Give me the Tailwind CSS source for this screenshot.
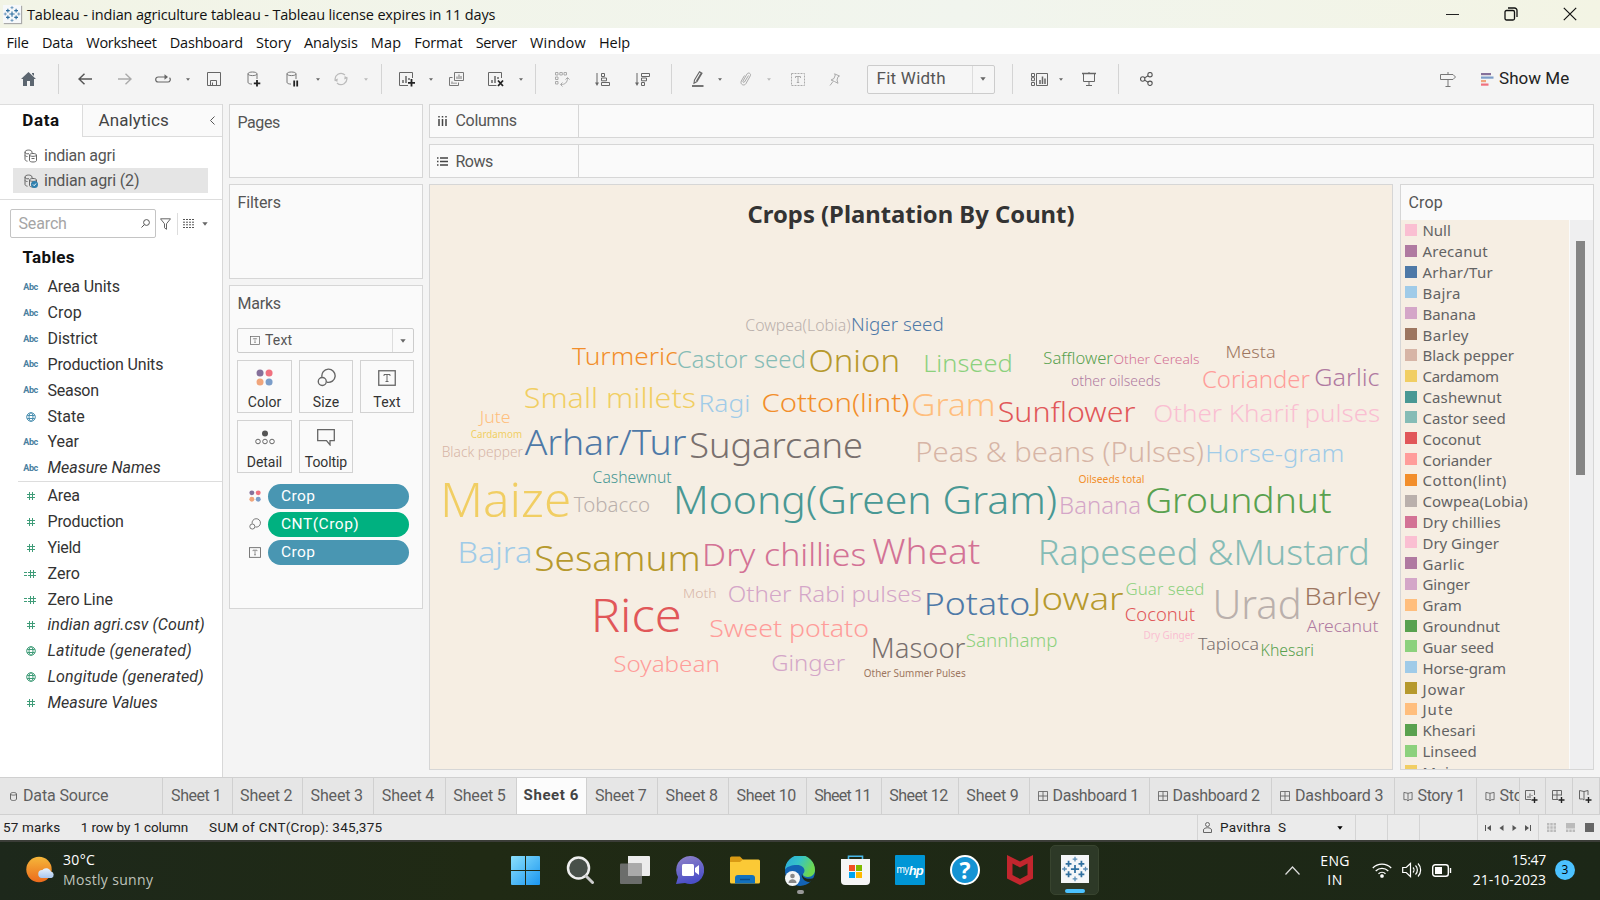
<!DOCTYPE html>
<html lang="en">
<head>
<meta charset="utf-8">
<title>Tableau - indian agriculture tableau</title>
<script src="https://cdn.jsdelivr.net/npm/@tailwindcss/browser@4"></script>
</head>
<body class="w-[1600px] h-[900px] overflow-hidden bg-[#f4f4f4] font-['Roboto',sans-serif] text-[#333] text-base flex flex-col">

<svg class="hidden">
  <defs>
    <symbol id="tab" viewBox="0 0 24 24"><g fill="none" stroke-width="1.5">
      <path stroke="#2f6f9f" d="M12 8.5v7M8.5 12h7M6.5 5v5M4 7.5h5M17.5 5v5M15 7.5h5M6.5 14v5M4 16.500h5M17.500 14v5M15 16.500h5"/>
      <path stroke="#5b8db5" stroke-width="1.100" d="M12 1.500v4M10 3.500h4M12 18.500v4M10 20.500h4M3 10v4M1 12h4M21 10v4M19 12h4"/></g></symbol>
    <symbol id="caret" viewBox="0 0 8 6"><path fill="currentColor" d="M0 0.500h8L4 5.500z"/></symbol>
    <symbol id="db" viewBox="0 0 14 14"><g fill="none" stroke="#666" stroke-width="1"><path d="M1 3c0-2.600 7-2.600 7 0v1M1 3v7.500c0 .8 1 1.500 2.500 1.700M1 3c0 2 3 2 4 1.700M1 6.500c.6.9 1.500 1 2.500 1"/><path d="M5.500 6c0-2 7-2 7 0v5.500c0 2-7 2-7 0zM5.500 6c0 1.800 7 1.800 7 0M7.500 9.500h3"/></g></symbol>
    <symbol id="hash" viewBox="0 0 14 12"><path stroke="#3f9c78" stroke-width="1" fill="none" d="M5.500 2v8M8.500 2v8M3 4.500h8M3 7.500h8"/></symbol>
    <symbol id="ehash" viewBox="0 0 14 12"><path stroke="#3f9c78" stroke-width="1" fill="none" d="M6.500 2v8M9.500 2v8M4 4.500h8M4 7.500h8M0 4.500h3M0 7.500h3"/></symbol>
    <symbol id="globe" viewBox="0 0 12 12"><g fill="none" stroke="currentColor" stroke-width="1"><circle cx="6" cy="6" r="4.300"/><ellipse cx="6" cy="6" rx="2" ry="4.300"/><path d="M2.200 4.500h7.600M2.200 7.500h7.600"/></g></symbol>
    <symbol id="four" viewBox="0 0 16 16"><circle cx="3.800" cy="3.800" r="3.300" fill="#85709a"/><circle cx="12.300" cy="3.800" r="3.300" fill="#f0717f"/><circle cx="3.800" cy="12.300" r="3.300" fill="#f0a57b"/><circle cx="12.300" cy="12.300" r="3.300" fill="#7b9dc9"/></symbol>
    <symbol id="size" viewBox="0 0 18 18"><g fill="none" stroke="#666" stroke-width="1.300"><path d="M4.700 8.500A6.300 6.300 0 1 1 9.500 13.500"/><circle cx="5" cy="12.800" r="3.800"/></g></symbol>
    <symbol id="tbox" viewBox="0 0 18 16"><rect x=".75" y=".75" width="16.500" height="14.500" fill="none" stroke="#666" stroke-width="1.300"/><path fill="none" stroke="#666" d="M6 6V4.500h6V6M9 4.500v7M7.500 11.500h3"/></symbol>
    <symbol id="dash" viewBox="0 0 11 11"><path fill="none" stroke="#666" d="M.5.500h10v10H.500zM5.500.500v10M.500 5.500h10"/></symbol>
    <symbol id="story" viewBox="0 0 11 12"><path fill="none" stroke="#666" d="M1 1.500l4.500 1 4.500-1v8h-3l-1.500 1.500-1.500-1.500H1zM5.500 2.500V10"/></symbol>
  </defs>
</svg>

<!-- title bar -->
<header class="h-[28px] shrink-0 flex items-center bg-linear-to-r from-[#f2f4e6] via-[#f1f5ee] via-60% to-[#f3f4e4] font-['Open_Sans',sans-serif] text-[14.500px] text-[#111]">
  <div class="ml-[3px] size-[18px] bg-[#f6f8fa] shadow-[1px_1px_1px_#aaa]"><svg class="size-[18px]"><use href="#tab"/></svg></div>
  <span class="ml-[6px] mt-[2px] whitespace-nowrap" data-w="468">Tableau - indian agriculture tableau - Tableau license expires in 11 days</span>
  <div class="ml-auto flex items-center h-full pr-[23px] gap-[45px]">
    <svg class="w-[13px] h-[14px]" viewBox="0 0 13 14"><path stroke="#222" d="M0 7.500h13"/></svg>
    <svg class="size-[14px]" viewBox="0 0 14 14" fill="none" stroke="#111" stroke-width="1.300"><rect x="1" y="3.500" width="9.500" height="9.500" rx="1.500"/><path d="M4 1h6.500a2.500 2.500 0 0 1 2.500 2.500V10"/></svg>
    <svg class="size-[14px]" viewBox="0 0 14 14" fill="none" stroke="#111" stroke-width="1.200"><path d="M.8.800l12.400 12.400M13.200.800L.8 13.200"/></svg>
  </div>
</header>

<!-- menu -->
<nav class="h-[26px] shrink-0 bg-white flex items-center pl-[6.500px] gap-[13.100px] font-['Open_Sans',sans-serif] text-[14.500px] text-[#111] pt-[3px]">
  <span data-w="22">File</span><span data-w="31">Data</span><span data-w="70">Worksheet</span><span data-w="73">Dashboard</span><span data-w="34.500">Story</span><span data-w="53.500">Analysis</span><span data-w="30">Map</span><span data-w="48">Format</span><span data-w="41">Server</span><span data-w="55.500">Window</span><span data-w="31">Help</span>
</nav>

<!-- toolbar -->
<div class="h-[50px] shrink-0 flex items-center text-[#666]">
  <div class="w-[57.500px] flex justify-center"><svg class="w-[15px] h-[14px]" viewBox="0 0 15 14"><path fill="#5c6670" d="M7.500 0L15 7h-2v7H9V9H6v5H2V7H0zM11 1h2v3l-2-2z"/></svg></div>
  <i class="w-px h-[30px] bg-[#d4d4d4]"></i>
  <div class="ml-[6px] w-[40px] flex justify-center"><svg class="w-[14px] h-[12px]" viewBox="0 0 14 12" fill="none" stroke="#555" stroke-width="1.500"><path d="M14 6H1M6.500.8L1 6l5.500 5.200"/></svg></div>
  <div class="w-[40px] flex justify-center"><svg class="w-[14px] h-[12px]" viewBox="0 0 14 12" fill="none" stroke="#aaa" stroke-width="1.400"><path d="M0 6h13M7.500.8L13 6l-5.500 5.200"/></svg></div>
  <div class="w-[37px] flex justify-center"><svg class="w-[16px] h-[10px]" viewBox="0 0 16 10" fill="none" stroke="#666" stroke-width="1.200"><path d="M11.500 3H3.200a2.500 2.500 0 0 0 0 5h9.600a2.500 2.500 0 0 0 1.700-4.300"/><path fill="#666" stroke="none" d="M9.500.300v5.400L13 3z"/></svg></div>
  <div class="w-[12px] flex justify-center"><svg class="w-[4px] h-[3px]"><use href="#caret"/></svg></div>
  <div class="w-[40px] flex justify-center"><svg class="size-[14px]" viewBox="0 0 14 14" fill="none" stroke="#666"><path d="M.5.500h13v13H.500zM3.500 13V8.500h6V13M5.500 13v-2.500"/></svg></div>
  <div class="w-[40px] flex justify-center"><svg class="w-[14px] h-[16px]" viewBox="0 0 14 16" fill="none" stroke="#777"><path d="M1 2.800c0-2.400 9-2.400 9 0s-9 2.400-9 0v8.500c0 1.200 2 1.700 4 1.800M10 3v5"/><path stroke="#222" stroke-width="1.800" d="M10 9v6.500M6.800 12.300h6.500"/></svg></div>
  <div class="w-[38px] flex justify-center"><svg class="w-[14px] h-[16px]" viewBox="0 0 14 16" fill="none" stroke="#777"><path d="M1 2.800c0-2.400 9-2.400 9 0s-9 2.400-9 0v8.500c0 1.200 2 1.700 4 1.800M10 3v5"/><path stroke="#222" stroke-width="1.800" d="M8.200 9.500v6M11.200 9.500v6"/></svg></div>
  <div class="w-[12px] flex justify-center"><svg class="w-[4px] h-[3px]"><use href="#caret"/></svg></div>
  <div class="w-[34px] flex justify-center"><svg class="size-[14px]" viewBox="0 0 14 14" fill="none" stroke="#bbb" stroke-width="1.200"><path d="M1.500 9A5.800 5.800 0 0 1 11 3M12.500 5A5.800 5.800 0 0 1 3 11"/><path fill="#bbb" stroke="none" d="M0 8l3.800-1.500-.5 3.500zM14 6l-3.800 1.500.5-3.500z"/></svg></div>
  <div class="w-[16px] flex justify-center text-[#bbb]"><svg class="w-[4px] h-[3px]"><use href="#caret"/></svg></div>
  <i class="ml-[7px] w-px h-[30px] bg-[#d4d4d4]"></i>
  <div class="ml-[5px] w-[40px] flex justify-center"><svg class="w-[16px] h-[15px]" viewBox="0 0 16 15" fill="none" stroke="#666"><path d="M13.500 6V.500H.500v13H9"/><path stroke-width="1.500" d="M4 11V8M7 11V4M10 8V6"/><path stroke="#222" stroke-width="1.800" d="M12.500 7v7.500M9 10.800h7"/></svg></div>
  <div class="w-[9px] flex justify-center"><svg class="w-[4px] h-[3px]"><use href="#caret"/></svg></div>
  <div class="ml-[1px] w-[40px] flex justify-center"><svg class="w-[15px] h-[14px]" viewBox="0 0 15 14" fill="none" stroke="#777"><path d="M5.500.500h9v8h-9zM3.500 5.500h-3v8h9v-3M8 7V4.500M10 7V2.500M12 7V4M3 12V9.500M5 12v-1.500M7 12v-1.500"/></svg></div>
  <div class="w-[38px] flex justify-center"><svg class="w-[16px] h-[15px]" viewBox="0 0 16 15" fill="none" stroke="#666"><path d="M13.500 6V.500H.500v13H8.500"/><path stroke-width="1.500" d="M4 11V8M7 11V4M10 7V5"/><path stroke="#222" stroke-width="1.800" d="M10 8.500l5 5.500M15 8.500l-5 5.500"/></svg></div>
  <div class="w-[12px] flex justify-center"><svg class="w-[4px] h-[3px]"><use href="#caret"/></svg></div>
  <i class="ml-[8.500px] w-px h-[30px] bg-[#d4d4d4]"></i>
  <div class="ml-[5.500px] w-[41px] flex justify-center"><svg class="w-[15px] h-[15px]" viewBox="0 0 15 15" fill="none" stroke="#aaa"><path d="M.5.500h2.500v2.500H.500zM4.800.500h2.500v2.500H4.800zM9 .5h2.500v2.500H9zM.5 5h2.500v2.500H.500zM.5 9.500h2.500v2.500H.500zM6 12.500c4 0 6.500-2 6.500-6.500M10.500 7.500l2-2 2 2M7.500 10.500l-2 2 2 2"/></svg></div>
  <div class="w-[40px] flex justify-center"><svg class="w-[15px] h-[13px]" viewBox="0 0 15 13" fill="none" stroke="#666"><path d="M2 0v11"/><path fill="#666" stroke="none" d="M0 9.500h4l-2 3.500z"/><path d="M6.500.500h3v3h-3zM6.500 5h5v2.800h-5zM6.500 9.500h8v3h-8z"/></svg></div>
  <div class="w-[40px] flex justify-center"><svg class="w-[15px] h-[13px]" viewBox="0 0 15 13" fill="none" stroke="#666"><path d="M2 0v11"/><path fill="#666" stroke="none" d="M0 9.500h4l-2 3.500z"/><path d="M6.500.500h8v3h-8zM6.500 5h5v2.800h-5zM6.500 9.500h3v3h-3z"/></svg></div>
  <i class="ml-[8px] w-px h-[30px] bg-[#d4d4d4]"></i>
  <div class="ml-[9px] w-[34px] flex justify-center"><svg class="w-[12px] h-[16px]" viewBox="0 0 12 16" fill="none" stroke="#666"><path stroke-width="1.100" d="M2.500 9L7.500.800l2.500 1.500L5 10.500l-3 1.700zM4.500 10l5-8.500"/><path stroke-width="1.800" d="M0 15h11.500"/></svg></div>
  <div class="w-[10px] flex justify-center"><svg class="w-[4px] h-[3px]"><use href="#caret"/></svg></div>
  <div class="w-[42px] flex justify-center"><svg class="w-[12px] h-[14px]" viewBox="0 0 12 14" fill="none" stroke="#aaa"><path d="M8.500 3.500L4.500 10c-.8 1-2 .2-1.500-1l4-7c1.200-2 4.500-.5 3.300 1.800L6 11.500C4.300 14.500-.3 12.500 1.300 9L4.500 3.500"/></svg></div>
  <div class="w-[5px] flex justify-center text-[#bbb]"><svg class="w-[4px] h-[3px]"><use href="#caret"/></svg></div>
  <div class="ml-[8px] w-[36px] flex justify-center"><svg class="w-[14px] h-[13px]" viewBox="0 0 14 13" fill="none" stroke="#aaa"><path stroke-dasharray="2 1" d="M.5.500h13v12H.500z"/><path d="M4.500 5V3.500h5V5M7 3.500v6M5.800 9.500h2.400"/></svg></div>
  <div class="w-[38px] flex justify-center"><svg class="w-[11px] h-[13px]" viewBox="0 0 11 13" fill="none" stroke="#aaa"><path d="M5.500.800L10.500 3 9 3.800 8 7l1 3.300-3.500-1.800L2 7l3-1.500L6.300 2zM4 8.500L1 12.500"/></svg></div>
  <div class="ml-[13px] w-[128px] h-[29px] border border-[#ccc] rounded-[2px] flex items-center bg-[#f6f6f6]">
    <span class="ml-[9px] text-[17px] text-[#555]" data-w="69">Fit Width</span>
    <div class="ml-auto w-[22px] h-full border-l border-[#ddd] flex items-center justify-center"><svg class="w-[6px] h-[4px]"><use href="#caret"/></svg></div>
  </div>
  <i class="ml-[17px] w-px h-[30px] bg-[#d4d4d4]"></i>
  <div class="ml-[11px] w-[32px] flex justify-center"><svg class="w-[17px] h-[13px]" viewBox="0 0 17 13" fill="none" stroke="#666"><path d="M.5.500h3v3h-3zM.5 4.700h3v3h-3zM.5 9.500h3v3h-3zM5.500.500h11v12h-11z"/><path stroke-width="1.500" d="M9 11V7M11.500 11V3.500M14 11V5.500"/></svg></div>
  <div class="w-[10px] flex justify-center"><svg class="w-[4px] h-[3px]"><use href="#caret"/></svg></div>
  <div class="ml-[4px] w-[39px] flex justify-center"><svg class="w-[14px] h-[14px]" viewBox="0 0 14 14" fill="none" stroke="#666"><path stroke-width="1.500" d="M0 1.500h14"/><path d="M1.500 2v7.500h11V2M7 9.500v4M4 13.500h6M7 0v1"/></svg></div>
  <i class="ml-[9px] w-px h-[30px] bg-[#d4d4d4]"></i>
  <div class="ml-[8.500px] w-[38px] flex justify-center"><svg class="w-[13px] h-[14px]" viewBox="0 0 13 14" fill="none" stroke="#555" stroke-width="1.100"><circle cx="10" cy="2.700" r="2.200"/><circle cx="2.700" cy="7" r="2.200"/><circle cx="10" cy="11.300" r="2.200"/><path d="M4.600 5.900l3.500-2.100M4.600 8.100l3.500 2.100"/></svg></div>
  <div class="ml-[264px] w-[38px] flex justify-center"><svg class="w-[16px] h-[15px]" viewBox="0 0 16 15" fill="none" stroke="#777"><path d="M.5 2.500H13l2.500 2.500L13 7.500H.500zM8 0v2.500M8 7.500v7M5.500 14.500h5"/></svg></div>
  <svg class="ml-[14px] w-[13px] h-[13px]" viewBox="0 0 13 13"><path fill="#85709a" d="M0 0h10v2.200H0z"/><path fill="#7b9dc9" d="M0 3.500h12.500v2.200H0z"/><path fill="#f0a57b" d="M0 7h5v2.200H0z"/><path fill="#f0717f" d="M0 10.500h7.500v2.200H0z"/></svg>
  <span class="ml-[5px] text-[17px] text-[#222]" data-w="70">Show Me</span>
</div>

<!-- workspace -->
<main class="h-[673px] shrink-0 flex">
  <aside class="w-[223px] h-full bg-white border-r border-[#d8d8d8] flex flex-col">
    <div class="flex h-[33px] shrink-0">
      <div class="w-[82px] border-t border-[#ddd] flex items-center justify-center text-[17px] font-bold text-[#111]"><span data-w="37">Data</span></div>
      <div class="flex-1 bg-[#fafafa] border border-[#dcdcdc] border-r-0 flex items-center pl-[15.500px] text-[17px] text-[#444]"><span data-w="70">Analytics</span>
        <svg class="ml-auto mr-[7px] w-[5px] h-[9px]" viewBox="0 0 5 9" fill="none" stroke="#555"><path d="M4.500.500l-4 4 4 4"/></svg></div>
    </div>
    <div class="mt-[6px] h-[25px] flex items-center pl-[24px] text-[16px] text-[#555]"><svg class="size-[14px]"><use href="#db"/></svg><span class="ml-[6px]" data-w="71">indian agri</span></div>
    <div class="h-[25px] ml-[13px] w-[195px] flex items-center pl-[11px] text-[16px] text-[#555] bg-[#e5e5e5]"><svg class="size-[14px]" viewBox="0 0 14 14"><use href="#db"/><circle cx="10.500" cy="10.500" r="3.500" fill="#2f80ae"/><path d="M9 10.500l1.200 1.200L12 9.500" stroke="#fff" fill="none"/></svg><span class="ml-[6px]" data-w="95">indian agri (2)</span></div>
    <div class="mt-[6px] border-t border-[#ddd] pt-[9px] pl-[10px] flex items-center">
      <div class="w-[146px] h-[29px] border border-[#c4c4c4] rounded-[2px] flex items-center px-[7.500px]"><span class="text-[16px] text-[#a5a5a5]" data-w="48">Search</span><svg class="ml-auto mr-[-2px] size-[9px]" viewBox="0 0 9 9" fill="none" stroke="#555"><circle cx="5.500" cy="3.500" r="2.900"/><path d="M3.300 5.700L.500 8.500"/></svg></div>
      <svg class="ml-[4px] w-[11px] h-[12px]" viewBox="0 0 11 12" fill="none" stroke="#666"><path d="M.5.800h10l-4 5v5.500l-2-1.500v-4z"/></svg>
      <i class="ml-[6px] w-px h-[22px] bg-[#ddd]"></i>
      <svg class="ml-[5px] w-[11px] h-[9px]" viewBox="0 0 11 9" stroke="#555"><path stroke-dasharray="2 1" d="M0 .5h11M0 3.200h11M0 5.800h11M0 8.500h11"/></svg>
      <svg class="ml-[8px] w-[6px] h-[4px] text-[#666]"><use href="#caret"/></svg>
    </div>
    <div class="mt-[6px] h-[27px] pl-[22.500px] flex items-center text-[17px] font-bold text-[#111]"><span data-w="52">Tables</span></div>
    <div id="dims" class="mt-[3.500px]"></div>
    <div class="ml-[18px] border-t border-[#ddd]"></div>
    <div id="meas" class="mt-[1px]"></div>
  </aside>

  <section class="w-[194px] ml-[6px] flex flex-col gap-[6px] text-[16px] text-[#555]">
    <div class="h-[74px] shrink-0 bg-[#fafafa] border border-[#d6d6d6] pl-[7.500px] pt-[6px] leading-[23px]"><span data-w="42">Pages</span></div>
    <div class="h-[95px] shrink-0 bg-[#fafafa] border border-[#d6d6d6] pl-[7.500px] pt-[6px] leading-[23px]"><span data-w="43">Filters</span></div>
    <div class="h-[324px] shrink-0 bg-[#fafafa] border border-[#d6d6d6] px-[7px] pt-[6px] leading-[23px]"><span class="ml-[.5px]" data-w="43">Marks</span>
      <div class="mt-[13px] w-[177px] h-[25px] border border-[#ccc] rounded-[2px] flex items-center text-[14px]"><svg class="ml-[12px] w-[10px] h-[9px]" viewBox="0 0 18 16"><use href="#tbox"/></svg><span class="ml-[5px]" data-w="27">Text</span><div class="ml-auto w-[21px] h-full border-l border-[#ddd] flex items-center justify-center text-[#666]"><svg class="w-[6px] h-[4px]"><use href="#caret"/></svg></div></div>
      <div class="mt-[7px] w-[178px] grid grid-cols-[55px_54px_54px] gap-x-[7px] gap-y-[7px] text-[14px] text-[#333] leading-[17px]">
        <div class="h-[53px] border border-[#d2d2d2] flex flex-col items-center pt-[8px]"><svg class="size-[17px]"><use href="#four"/></svg><span class="mt-[8px]" data-w="33">Color</span></div>
        <div class="h-[53px] border border-[#d2d2d2] flex flex-col items-center pt-[7px]"><svg class="size-[19px]"><use href="#size"/></svg><span class="mt-[7px]" data-w="26">Size</span></div>
        <div class="h-[53px] border border-[#d2d2d2] flex flex-col items-center pt-[9px]"><svg class="w-[18px] h-[16px]"><use href="#tbox"/></svg><span class="mt-[8px]" data-w="27">Text</span></div>
        <div class="h-[53px] border border-[#d2d2d2] flex flex-col items-center pt-[9px]"><svg class="w-[20px] h-[16px]" viewBox="0 0 20 16"><circle cx="10" cy="3.500" r="3" fill="#555"/><g fill="none" stroke="#666"><circle cx="3" cy="11.500" r="2.300"/><circle cx="10" cy="11.500" r="2.300"/><circle cx="17" cy="11.500" r="2.300"/></g></svg><span class="mt-[8px]" data-w="35">Detail</span></div>
        <div class="h-[53px] border border-[#d2d2d2] flex flex-col items-center pt-[8px]"><svg class="w-[18px] h-[17px]" viewBox="0 0 18 17" fill="none" stroke="#666" stroke-width="1.300"><path d="M.7.700h16.600v11H13v4.200l-3.500-4.200H.700z"/></svg><span class="mt-[8px]" data-w="42">Tooltip</span></div>
      </div>
      <div class="mt-[10.500px] flex flex-col gap-[3.400px] text-[15.500px] text-white leading-[25px]">
        <div class="flex items-center"><svg class="ml-[12px] w-[12px] h-[12px]"><use href="#four"/></svg><div class="ml-[7px] w-[141px] h-[25px] rounded-full bg-[#4996b2] pl-[13px]"><span data-w="34">Crop</span></div></div>
        <div class="flex items-center"><svg class="ml-[12px] w-[12px] h-[12px]"><use href="#size"/></svg><div class="ml-[7px] w-[141px] h-[25px] rounded-full bg-[#00b180] pl-[13px]"><span data-w="78">CNT(Crop)</span></div></div>
        <div class="flex items-center"><svg class="ml-[12px] w-[12px] h-[11px]"><use href="#tbox"/></svg><div class="ml-[7px] w-[141px] h-[25px] rounded-full bg-[#4996b2] pl-[13px]"><span data-w="34">Crop</span></div></div>
      </div>
    </div>
  </section>

  <section class="ml-[6px] w-[1165px] flex flex-col text-[16px] text-[#555]">
    <div class="h-[34px] bg-[#fafafa] border border-[#d6d6d6] flex items-center"><div class="w-[149px] h-full border-r border-[#d6d6d6] flex items-center pl-[8px]"><svg class="w-[9px] h-[10px]" viewBox="0 0 9 10" stroke="#444" stroke-width="1.500"><path stroke-dasharray="1.500 1.500 7" d="M1 0v10M4.500 0v10M8 0v10"/></svg><span class="ml-[8.500px] mt-[.5px]" data-w="61">Columns</span></div></div>
    <div class="mt-[6px] h-[34px] bg-[#fafafa] border border-[#d6d6d6] flex items-center"><div class="w-[149px] h-full border-r border-[#d6d6d6] flex items-center pl-[7px]"><svg class="w-[11px] h-[9px]" viewBox="0 0 11 9" stroke="#444" stroke-width="1.300"><path d="M0 1h1.500M3 1h8M0 4.500h1.500M3 4.500h8M0 8h1.500M3 8h8"/></svg><span class="ml-[7.500px] mt-[1px]" data-w="37">Rows</span></div></div>
    <div class="mt-[6px] flex h-[586px]">
      <svg id="cloud" class="w-[964px] h-[586px] shrink-0 bg-[#f6eee3] border border-[#d6d6d6] font-['Noto_Sans','Open_Sans',sans-serif]" viewBox="430 185 962 584"></svg>
      <div class="ml-[7px] w-[194px] h-full border border-[#d6d6d6] bg-[#fafafa] flex flex-col">
        <div class="h-[35px] shrink-0 pl-[7.500px] flex items-center text-[16px] text-[#555]"><span data-w="34">Crop</span></div>
        <div class="flex-1 min-h-0 flex">
          <div id="legend" class="w-[168px] h-full overflow-hidden bg-[#f6eee3] font-['Noto_Sans',sans-serif] text-[15px] text-[#636363]"></div>
          <div class="flex-1 ml-px bg-[#efeff0] pt-[21px] pl-[6px]"><div class="w-[9px] h-[234px] bg-[#858585]"></div></div>
        </div>
      </div>
    </div>
  </section>
</main>

<!-- sheet tabs -->
<div id="tabs" class="h-[38px] shrink-0 flex border-t border-b border-[#d0d0d0] bg-[#e6e6e6] text-[16px] text-[#5e5e5e]"></div>

<!-- status bar -->
<div class="h-[25px] shrink-0 bg-[#ebebeb] flex items-center text-[13.500px] text-[#222]">
  <span class="ml-[3px]" data-w="57">57 marks</span><span class="ml-[20.500px]" data-w="107">1 row by 1 column</span><span class="ml-[21px]" data-w="173">SUM of CNT(Crop): 345,375</span>
  <div class="ml-auto h-full flex items-center">
    <div class="w-[158px] h-full border-l border-[#d4d4d4] flex items-center pl-[5px]"><svg class="w-[9px] h-[11px]" viewBox="0 0 9 11" fill="none" stroke="#666"><circle cx="4.500" cy="2.500" r="2"/><path d="M.5 10.500V8c0-3 8-3 8 0v2.500z"/></svg><span class="ml-[8px]" data-w="66">Pavithra&nbsp; S</span><svg class="ml-auto mr-[12px] w-[6px] h-[4px] text-black"><use href="#caret"/></svg></div>
    <div class="w-[32px] h-full border-l border-[#d4d4d4]"></div><div class="w-[32px] h-full border-l border-[#d4d4d4]"></div><div class="w-[58px] h-full border-l border-[#d4d4d4]"></div>
    <div class="w-[61px] h-full border-l border-[#d4d4d4] flex items-center pl-[7px] gap-[8px]">
      <svg class="w-[6px] h-[6px]" viewBox="0 0 6 6" fill="#555"><path d="M0 0h1v6H0zM6 0v6L2 3z"/></svg><svg class="w-[5px] h-[6px]" viewBox="0 0 5 6" fill="#555"><path d="M4.500 0v6L.500 3z"/></svg><svg class="w-[5px] h-[6px]" viewBox="0 0 5 6" fill="#555"><path d="M.5 0v6l4-3z"/></svg><svg class="w-[6px] h-[6px]" viewBox="0 0 6 6" fill="#555"><path d="M5 0h1v6H5zM0 0v6l4-3z"/></svg>
    </div>
    <div class="w-[62px] h-full border-l border-[#d4d4d4] flex items-center pl-[8px] gap-[10px]">
      <svg class="w-[9px] h-[9px]" viewBox="0 0 9 9" fill="#bbb"><path d="M0 0h2.400v2.400H0zM3.300 0h2.400v2.400H3.300zM6.600 0H9v2.400H6.600zM0 3.300h2.400v2.400H0zM3.300 3.300h2.400v2.400H3.300zM6.600 3.300H9v2.400H6.600zM0 6.600h2.400V9H0zM3.300 6.600h2.400V9H3.300zM6.600 6.600H9V9H6.600z"/></svg>
      <svg class="w-[9px] h-[9px]" viewBox="0 0 9 9" fill="#bbb"><path d="M0 0h9v5.500H0zM0 6.500h2.400V9H0zM3.300 6.500h2.400V9H3.300zM6.600 6.500H9V9H6.600z"/></svg>
      <div class="size-[9px] bg-[#666]"></div>
    </div>
  </div>
</div>

<!-- taskbar -->
<footer class="h-[60px] shrink-0 flex items-center pb-[2px] border-t-2 border-[#3b3d38] bg-linear-to-r from-[#1d281b] via-[#202a14] via-30% to-[#1c2717] text-white font-['Open_Sans',sans-serif] text-[14px]">
  <svg class="ml-[26px] w-[29px] h-[28px]" viewBox="0 0 29 28"><defs><linearGradient id="sun" x1="0" y1="0" x2="0" y2="1"><stop stop-color="#f5b73a"/><stop offset="1" stop-color="#ec6a1c"/></linearGradient><linearGradient id="cl" x1="0" y1="0" x2="0" y2="1"><stop stop-color="#e8f1fb"/><stop offset="1" stop-color="#a9c6ee"/></linearGradient></defs><circle cx="13" cy="13.500" r="12.700" fill="url(#sun)"/><path fill="url(#cl)" d="M16 22a4 4 0 0 1 .5-8 5 5 0 0 1 8.500 1.500 3.400 3.400 0 0 1 .5 6.500z"/></svg>
  <div class="ml-[8px] w-[110px] leading-[20px]"><div><span data-w="32">30°C</span></div><div class="text-[#bfc3bb]"><span data-w="90">Mostly sunny</span></div></div>
  <div class="ml-[324.500px] w-[55px] flex justify-center"><svg class="size-[29px]" viewBox="0 0 29 29"><defs><linearGradient id="win" x1="0" y1="0" x2="1" y2="1"><stop stop-color="#8be0fc"/><stop offset="1" stop-color="#1a96f0"/></linearGradient></defs><path fill="url(#win)" d="M1 0h13v14H0V1a1 1 0 0 1 1-1zM15 0h13a1 1 0 0 1 1 1v13H15zM0 15h14v14H1a1 1 0 0 1-1-1zM15 15h14v13a1 1 0 0 1-1 1H15z"/></svg></div>
  <div class="w-[55px] flex justify-center"><svg class="size-[28px]" viewBox="0 0 28 28"><circle cx="12.500" cy="12" r="10.500" fill="#48504a" stroke="#eee" stroke-width="2.500"/><path d="M20 20l6.500 6.500" stroke="#ccc" stroke-width="3" stroke-linecap="round"/></svg></div>
  <div class="w-[55px] flex justify-center"><svg class="w-[30px] h-[28px]" viewBox="0 0 30 28"><path fill="#ececec" d="M8 0h21a1 1 0 0 1 1 1v18a1 1 0 0 1-1 1H8z"/><rect y="7.500" width="22" height="20.500" rx="1" fill="#6b6d6b"/><path fill="#aaa" d="M8 7.500h14V20H8z"/></svg></div>
  <div class="w-[55px] flex justify-center"><svg class="size-[28px]" viewBox="0 0 28 28"><defs><linearGradient id="ch" x1="0" y1="0" x2=".3" y2="1"><stop stop-color="#9184c8"/><stop offset="1" stop-color="#4b4fc8"/></linearGradient></defs><path fill="url(#ch)" d="M14 0a14 14 0 1 1-5 27L0 28l2-7A14 14 0 0 1 14 0z"/><rect x="6" y="8" width="12" height="12" rx="1.500" fill="#fff"/><path fill="#fff" d="M19 12l4-3v10l-4-3z"/></svg></div>
  <div class="w-[55px] flex justify-center"><svg class="w-[30px] h-[28px]" viewBox="0 0 30 28"><path fill="#d99a14" d="M0 2a1.500 1.500 0 0 1 1.500-1.500H10l3 3V8H0z"/><path fill="#fbc936" d="M0 6h10l3-2.500h15.500A1.500 1.500 0 0 1 30 5v21a1.500 1.500 0 0 1-1.500 1.500h-27A1.500 1.500 0 0 1 0 26z"/><path fill="#1371bd" d="M5 27.500V22a3 3 0 0 1 3-3h14a3 3 0 0 1 3 3v5.500z"/><path stroke="#0a4c8a" stroke-width="1.500" d="M10 23.500h10"/></svg></div>
  <div class="w-[55px] h-full flex flex-col items-center justify-end"><svg class="size-[30px] shrink-0" viewBox="0 0 30 30"><defs><linearGradient id="eg" x1="0" y1="0" x2="1" y2=".4"><stop stop-color="#2aa8dc"/><stop offset=".5" stop-color="#35c3c8"/><stop offset="1" stop-color="#6ed84f"/></linearGradient></defs><circle cx="15" cy="15" r="15" fill="#1363b4"/><path fill="url(#eg)" d="M0 14A15 15 0 0 1 30 14c0 4-3 7-7 7-3 0-5-1-5-2.500s1.500-1.500 1.500-4c0-3-3-5.500-7.500-5.500-6 0-11 2-12 5z"/><path fill="#1f2818" d="M30 21.500c-5 2.500-13 1.500-13-4-1 4 2 8 7 8.500 2 0 4-1.500 6-4.500z"/><circle cx="7.500" cy="22.500" r="7.500" fill="#f4f6f7"/><circle cx="7.500" cy="20" r="2.300" fill="#888"/><path fill="#888" d="M3.500 27c0-5 8-5 8 0z"/></svg><i class="mt-[4px] mb-[4px] w-[7px] h-[4px] rounded-full bg-[#999]"></i></div>
  <div class="w-[55px] flex justify-center"><svg class="w-[29px] h-[30px]" viewBox="0 0 29 30"><path d="M7.500 5V1.200h14V5" fill="none" stroke="#49b8ea" stroke-width="1.600"/><path fill="#f5f5f5" d="M0 4h29v22a4 4 0 0 1-4 4H4a4 4 0 0 1-4-4z"/><path fill="#f25022" d="M8 10h6v6H8z"/><path fill="#7fba00" d="M15 10h6v6h-6z"/><path fill="#00a4ef" d="M8 17h6v6H8z"/><path fill="#ffb900" d="M15 17h6v6h-6z"/></svg></div>
  <div class="w-[55px] flex justify-center"><div class="size-[30px] bg-[#0096d6] rounded-[1px] flex items-center justify-center leading-none font-['Liberation_Sans',sans-serif]"><span class="text-[10px] tracking-[-.5px]">my</span><span class="italic font-bold text-[13px] tracking-[-1px] pr-[1px]">hp</span></div></div>
  <div class="w-[55px] flex justify-center"><div class="size-[30px] rounded-full bg-[#1493d4] border-2 border-white flex items-center justify-center font-bold text-[23px] leading-none">?</div></div>
  <div class="w-[55px] flex justify-center"><svg class="w-[26px] h-[30px]" viewBox="0 0 26 30"><path fill="#c2262e" fill-rule="evenodd" d="M0 0l13 6.500L26 0v23.500L13 30 0 23.500zM5.500 8.500v11.500L13 24l7.500-4V8.500L13 12.500z"/></svg></div>
  <div class="ml-[2.500px] w-[49px] h-[50px] rounded-[5px] bg-[#2d3927] border border-[#38442f] flex flex-col items-center pt-[9px]"><div class="size-[28px] bg-[#f4f6f8]"><svg class="size-[28px]"><use href="#tab"/></svg></div><i class="mt-[6px] w-[20px] h-[4px] rounded-full bg-[#4cc2ff]"></i></div>
  <svg class="ml-[186px] w-[15px] h-[9px]" viewBox="0 0 15 9" fill="none" stroke="#ddd" stroke-width="1.200"><path d="M.5 8.500l7-7.500 7 7.500"/></svg>
  <div class="ml-[20px] w-[30px] text-center leading-[19px] whitespace-nowrap flex flex-col items-center"><span data-w="29">ENG</span><span data-w="15">IN</span></div>
  <svg class="ml-[22px] w-[20px] h-[16px]" viewBox="0 0 20 16" fill="none" stroke="#fff" stroke-width="1.300"><path d="M.8 6a13 13 0 0 1 18.400 0M3.700 9a9 9 0 0 1 12.600 0M6.500 11.800a5 5 0 0 1 7 0"/><circle cx="10" cy="14" r="1.200" fill="#fff"/></svg>
  <svg class="ml-[10px] w-[20px] h-[16px]" viewBox="0 0 20 16" fill="none" stroke="#fff" stroke-width="1.200"><path d="M.7 5.500h3.500L8.500 1.500v13L4.200 10.500H.700zM11 5.500c1.300 1.300 1.300 3.700 0 5M13.500 3.500c2.500 2.500 2.500 6.500 0 9M16 1.500c3.500 3.500 3.500 9.500 0 13"/></svg>
  <svg class="ml-[10px] w-[20px] h-[13px]" viewBox="0 0 20 13" fill="none" stroke="#fff" stroke-width="1.400"><rect x=".7" y=".7" width="15.600" height="11.600" rx="2.500"/><path d="M18.500 4v5"/><path fill="#fff" stroke="none" d="M3 3h7v7H3z"/></svg>
  <div class="ml-auto mr-[9px] leading-[20px] flex flex-col items-end"><span data-w="34">15:47</span><span data-w="73">21-10-2023</span></div>
  <div class="mr-[25px] size-[20px] rounded-full bg-[#4cc2ff] text-black text-[12px] flex items-center justify-center">3</div>
</footer>

<script>
const $ = id => document.getElementById(id);

// Field lists: [icon, name, width, italic]
const icons = {
  abc: '<span class="text-[9px] font-bold text-[#4a7f9f] leading-none" data-w="14">Abc</span>',
  geo: '<svg class="size-[12px] text-[#4a8fb0]"><use href="#globe"/></svg>',
  ggeo: '<svg class="size-[12px] text-[#3f9c78]"><use href="#globe"/></svg>',
  num: '<svg class="w-[14px] h-[12px]"><use href="#hash"/></svg>',
  calc: '<svg class="w-[14px] h-[12px]"><use href="#ehash"/></svg>'
};
const field = ([ic, name, w, it]) =>
  `<div class="h-[25.85px] flex items-center pl-[23px] text-[16px] text-[#333] whitespace-nowrap"><div class="w-[15px] flex justify-center">${icons[ic]}</div><span class="${it ? 'ml-[9.500px] italic' : 'ml-[9.500px]'}" data-w="${w}">${name}</span></div>`;
$('dims').innerHTML = [['abc','Area Units',72],['abc','Crop',34],['abc','District',50],['abc','Production Units',115.5],['abc','Season',51],['geo','State',37],['abc','Year',31],['abc','Measure Names',113,1]].map(field).join('');
$('meas').innerHTML = [['num','Area',32],['num','Production',76],['num','Yield',33],['calc','Zero',32],['calc','Zero Line',65],['num','indian agri.csv (Count)',157,1],['ggeo','Latitude (generated)',144,1],['ggeo','Longitude (generated)',156,1],['num','Measure Values',110,1]].map(field).join('');

// Legend: [name, colour, width]
const legend = [['Null','#fabfd2',28],['Arecanut','#b07aa1',65],['Arhar/Tur','#4e79a7',70],['Bajra','#a0cbe8',38],['Banana','#d4a6c8',53],['Barley','#9d7660',46],['Black pepper','#d7b5a6',91],['Cardamom','#f1ce63',76],['Cashewnut','#499894',79],['Castor seed','#86bcb6',83],['Coconut','#e15759',58],['Coriander','#ff9d9a',69],['Cotton(lint)','#f28e2b',84],['Cowpea(Lobia)','#bab0ac',105],['Dry chillies','#d37295',78],['Dry Ginger','#fabfd2',76],['Garlic','#b07aa1',42],['Ginger','#d4a6c8',47],['Gram','#ffbe7d',39],['Groundnut','#59a14f',77],['Guar seed','#8cd17d',71],['Horse-gram','#a0cbe8',83],['Jowar','#b6992d',43],['Jute','#ffbe7d',31],['Khesari','#59a14f',53],['Linseed','#8cd17d',54],['Maize','#f1ce63',42]];
$('legend').innerHTML = legend.map(([n, c, w]) =>
  `<div class="h-[20.84px] flex items-center pl-[4px]"><i class="size-[12px] mt-[-1px]" style="background:${c}"></i><span class="ml-[5.500px] leading-[20px] whitespace-nowrap" data-w="${w}">${n}</span></div>`).join('');

// Word cloud: [text, colour, left, right, baseline, size]
const words = [
['Cowpea(Lobia)','#bab0ac',746,850,331,16],['Niger seed','#4e79a7',852.3,943,330.7,18.5],
['Turmeric','#f28e2b',572.3,676.7,365,24.5],['Castor seed','#86bcb6',677.7,805,368.3,23.5],['Onion','#b6992d',810,898.7,372,32],
['Small millets','#f1ce63',525,695,408.3,27.5],['Ragi','#a0cbe8',700.3,749.3,411.7,24],['Cotton(lint)','#f28e2b',762.7,908.3,412,26.5],
['Jute','#ffbe7d',480,510,422.7,16],['Cardamom','#f1ce63',471.3,521.7,438.3,10.3],['Black pepper','#d7b5a6',442.7,522.3,457.3,14],
['Arhar/Tur','#4e79a7',525,685,455,35.5],['Sugarcane','#79706e',690.7,861.7,458.3,34],['Cashewnut','#499894',593.3,671,483.3,15.5],
['Maize','#f1ce63',443.3,569.3,516.7,47.5],['Tobacco','#bab0ac',574,649.3,511.7,20.5],['Moong(Green Gram)','#499894',675.7,1055.7,513.7,38.5],
['Bajra','#a0cbe8',459.7,531,563.3,30],['Sesamum','#b6992d',535.7,699.3,570.7,35],['Dry chillies','#d37295',704.3,865,566.3,31],
['Wheat','#d37295',872.7,979,564.3,35.5],['Rice','#e15759',594,680,632.3,46.5],['Moth','#d7b5a6',684,716,598.3,13.5],
['Other Rabi pulses','#d4a6c8',728.7,921,602.3,22.5],['Sweet potato','#ff9d9a',710.3,868,636.7,24],['Soyabean','#ff9d9a',614.3,719,672,22.5],
['Ginger','#d4a6c8',772.3,844.3,670.7,22.5],['Masoor','#79706e',872.7,964.3,657.7,27],['Other Summer Pulses','#9d7660',864.3,965.3,676.7,10.5],
['Linseed','#8cd17d',925,1011.7,372,24.5],['Safflower','#59a14f',1044,1112.3,364.3,15.5],['Other Cereals','#d37295',1114,1199,364.3,13],
['Mesta','#9d7660',1226.7,1275,358,16.5],['other oilseeds','#b07aa1',1071.7,1160,386,14],['Coriander','#ff9d9a',1203,1309,387.7,23.5],
['Garlic','#b07aa1',1315.3,1378.7,386,23],['Gram','#ffbe7d',912.7,994.3,416,31],['Sunflower','#e15759',999,1134.3,422.3,27.5],
['Other Kharif pulses','#fabfd2',1154.3,1379.3,422,24],['Peas &amp; beans (Pulses)','#d7b5a6',917.3,1202.7,461.7,28],['Horse-gram','#a0cbe8',1207,1343.3,461.7,24.5],
['Oilseeds total','#f28e2b',1079,1144,483.3,10.3],['Banana','#d4a6c8',1060.7,1140,513.7,23],['Groundnut','#59a14f',1146.7,1330.3,513,35],
['Rapeseed &amp;Mustard','#86bcb6',1040.3,1368.3,565,35.5],['Potato','#4e79a7',926,1029,614.7,31.5],['Jowar','#b6992d',1032.7,1122.3,610,31],
['Guar seed','#8cd17d',1126.3,1203.7,595,16.5],['Coconut','#e15759',1125.7,1194.3,621,18],['Urad','#bab0ac',1215.3,1300,619,39.5],
['Barley','#9d7660',1306.3,1379.3,605,24.5],['Arecanut','#b07aa1',1307,1377.7,632,17],['Sannhamp','#8cd17d',966.7,1056.7,647,18.5],
['Dry Ginger','#fabfd2',1144.3,1194,639,10.3],['Tapioca','#79706e',1198.3,1258.3,650,16.5],['Khesari','#59a14f',1261.7,1313.3,656,15.5]];
// Left side bearing of the first letter, as a share of the font size
const bearing = t => 'ATJW'.includes(t[0]) ? .01 : 'OCGSo'.includes(t[0]) ? .045 : .07;
$('cloud').innerHTML =
  '<text class="font-bold" x="747.500" y="223" font-size="24" fill="#333" textLength="327" lengthAdjust="spacingAndGlyphs">Crops (Plantation By Count)</text>' +
  words.map(([t, c, a, b, y, s]) => {
    const lb = bearing(t) * s;
    return `<text class="${s > 12 ? 'font-light' : 'font-normal'}" x="${a - lb}" y="${y}" font-size="${s}" fill="${c}" textLength="${b - a + lb + s * .04}" lengthAdjust="spacingAndGlyphs">${t}</text>`;
  }).join('');

// Sheet tabs: [label, right edge, text width, kind]
const tabs = [['Data Source',163,85,'src'],['Sheet 1',232.5,50],['Sheet 2',303,52],['Sheet 3',373.5,52],['Sheet 4',445.5,52],['Sheet 5',516.5,52],['Sheet 6',587,55,'on'],['Sheet 7',657.5,51],['Sheet 8',729,52],['Sheet 10',806.5,59],['Sheet 11',881.5,56],['Sheet 12',958.5,58],['Sheet 9',1029.5,52],['Dashboard 1',1149.5,86,'dash'],['Dashboard 2',1272,87,'dash'],['Dashboard 3',1394.5,88,'dash'],['Story 1',1476.5,47,'story'],['Story 2',1519.5,48,'story'],['',1546,0,'ns'],['',1572.5,0,'nd'],['',1600,0,'nt']];
const plus = '<path stroke="#222" stroke-width="1.400" d="M10.500 8v6M7.500 11h6"/>';
let left = 0;
$('tabs').innerHTML = tabs.map(([t, r, w, k]) => {
  const width = r - left; left = r;
  const cls = k === 'on' ? 'shrink-0 h-full flex items-center overflow-hidden whitespace-nowrap border-r border-[#d0d0d0] justify-center bg-[#fcfcfc] font-bold text-[15px] text-[#444] pb-[2px]'
    : (k === 'src' || k === 'dash' || k === 'story') ? 'shrink-0 h-full flex items-center overflow-hidden whitespace-nowrap border-r border-[#d0d0d0] pl-[8px]'
    : 'shrink-0 h-full flex items-center overflow-hidden whitespace-nowrap border-r border-[#d0d0d0] justify-center pr-[2px]';
  const ic = {
    src: '<svg class="ml-[2px] mr-[6px] w-[7px] h-[9px]" viewBox="0 0 7 9" fill="none" stroke="#666"><path d="M.5 2c0-2 6-2 6 0v5c0 2-6 2-6 0zM.5 2c0 1.500 6 1.500 6 0"/></svg>',
    dash: '<svg class="mr-[5px] shrink-0 size-[10px]"><use href="#dash"/></svg>',
    story: '<svg class="mr-[5px] shrink-0 w-[10px] h-[11px]"><use href="#story"/></svg>',
    ns: '<svg class="size-[14px]" viewBox="0 0 14 14" fill="none" stroke="#666"><path d="M10.500 6V1.500H1.500v9H7M4 9V7M6 9V4.500M8 7V6"/>' + plus + '</svg>',
    nd: '<svg class="size-[14px]" viewBox="0 0 14 14" fill="none" stroke="#666"><path d="M10.500 6.500V1.500H1.500v9H7M6 1.500v9M1.500 6h9"/>' + plus + '</svg>',
    nt: '<svg class="size-[14px]" viewBox="0 0 14 14" fill="none" stroke="#666"><path d="M10 6V1.500L6 2.500 1.500 1.500v8.500h3L6 11V2.500"/>' + plus + '</svg>'
  }[k] || '';
  return `<div class="${cls}" style="width:${width}px">${ic}${t ? `<span data-w="${w}">${t}</span>` : ''}</div>`;
}).join('');

function fit() {
  const all = [...document.querySelectorAll('[data-w]')];
  all.forEach(e => { e.style.whiteSpace = 'nowrap'; e.style.flexShrink = 0; e.style.letterSpacing = '0px'; });
  const widths = all.map(e => e.getBoundingClientRect().width);
  all.forEach((e, i) => { e.style.letterSpacing = ((+e.dataset.w + .3 - widths[i]) / e.textContent.length) + 'px'; });
}
fit();
addEventListener('load', fit);
document.fonts.ready.then(fit);
requestAnimationFrame(() => requestAnimationFrame(fit));
[50, 150, 400].forEach(ms => setTimeout(fit, ms));
</script>
</body>
</html>
